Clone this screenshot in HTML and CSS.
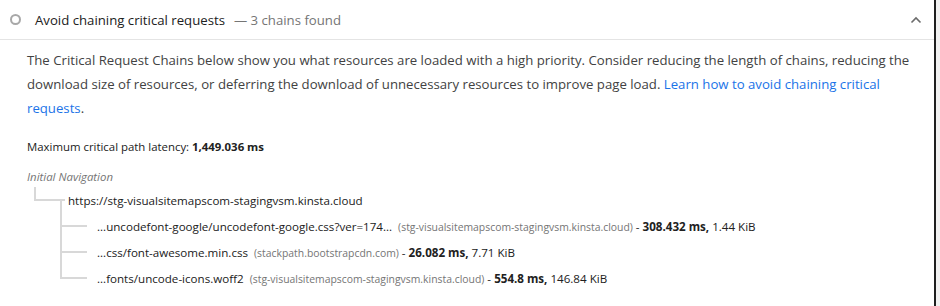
FILE: index.html
```html
<!DOCTYPE html>
<html lang="en">
<head>
    <meta charset="UTF-8">
    <meta name="viewport" content="width=device-width, initial-scale=1.0">
    <title>Avoid chaining critical requests</title>
    <link rel="stylesheet" href="styles.css">
</head>
<body>
    <div class="audit">
        <div class="audit-header">
            <span class="status-icon"></span>
            <span class="audit-title">Avoid chaining critical requests</span>
            <span class="audit-display">— 3 chains found</span>
            <svg class="chevron" width="12" height="8" viewBox="0 0 12 8">
                <path d="M1.5 6.5 L6 2 L10.5 6.5" fill="none" stroke="#6b6b6b" stroke-width="1.6"/>
            </svg>
        </div>

        <div class="audit-body">
            <p class="description">The Critical Request Chains below show you what resources are loaded with a high priority. Consider reducing the length of chains, reducing the download size of resources, or deferring the download of unnecessary resources to improve page load. <a href="#">Learn how to avoid chaining critical requests</a>.</p>

            <div class="crc-summary">Maximum critical path latency: <b>1,449.036 ms</b></div>

            <div class="crc-tree">
                <div class="crc-initial-nav">Initial Navigation</div>

                <div class="crc-node">
                    <span class="marker up-right"></span>
                    <span class="marker right"></span>
                    <span class="marker horiz-down"></span>
                    <span class="node-value first">https://stg-visualsitemapscom-stagingvsm.kinsta.cloud</span>
                </div>

                <div class="crc-node">
                    <span class="marker spacer"></span>
                    <span class="marker vert-right"></span>
                    <span class="marker right wide"></span>
                    <span class="node-value">
                        <span class="url">...uncodefont-google/uncodefont-google.css?ver=174...</span>
                        <span class="host">(stg-visualsitemapscom-stagingvsm.kinsta.cloud)</span>
                        - <span class="duration">308.432 ms,</span> 1.44 KiB
                    </span>
                </div>

                <div class="crc-node">
                    <span class="marker spacer"></span>
                    <span class="marker vert-right"></span>
                    <span class="marker right wide"></span>
                    <span class="node-value">
                        <span class="url">...css/font-awesome.min.css</span>
                        <span class="host">(stackpath.bootstrapcdn.com)</span>
                        - <span class="duration">26.082 ms,</span> 7.71 KiB
                    </span>
                </div>

                <div class="crc-node">
                    <span class="marker spacer"></span>
                    <span class="marker up-right"></span>
                    <span class="marker right wide"></span>
                    <span class="node-value">
                        <span class="url">...fonts/uncode-icons.woff2</span>
                        <span class="host">(stg-visualsitemapscom-stagingvsm.kinsta.cloud)</span>
                        - <span class="duration">554.8 ms,</span> 146.84 KiB
                    </span>
                </div>
            </div>
        </div>
    </div>
</body>
</html>
```

FILE: styles.css
```css
/* Page */
html {
    background: #f1f1f1;
}

body {
    margin: 0;
    font-family: "Open Sans", "Noto Sans", Arial, sans-serif;
    color: #212121;
}

.audit {
    width: 936px;
    height: 306px;
    background: #fff;
    border-right: 2px solid #1f1f1f;
    box-sizing: border-box;
}

/* Header */
.audit-header {
    display: flex;
    align-items: center;
    height: 39px;
    padding: 0 12px 0 10px;
    border-bottom: 1px solid #e4e4e4;
    font-size: 13.2px;
}

.status-icon {
    width: 7px;
    height: 7px;
    border: 2px solid #a8a8a8;
    border-radius: 50%;
    margin-right: 14px;
    margin-top: -1px;
}

.audit-title {
    color: #212121;
}

.audit-display {
    color: #757575;
    margin-left: 9px;
}

.chevron {
    margin-left: auto;
}

/* Body */
.audit-body {
    padding: 8px 18px 0 27px;
}

.description {
    margin: 0;
    font-size: 13.2px;
    line-height: 24px;
    color: #424242;
}

.description a {
    color: #1a73e8;
    text-decoration: none;
}

.crc-summary {
    margin-top: 17px;
    margin-bottom: 10px;
    font-size: 11.4px;
    line-height: 20px;
}

.crc-summary b {
    font-weight: 700;
}

/* Chain tree */
.crc-tree {
    font-size: 11.6px;
    white-space: nowrap;
}

.crc-initial-nav {
    color: #757575;
    font-style: italic;
    font-size: 11.4px;
    line-height: 20px;
}

.crc-node {
    display: flex;
    align-items: center;
    height: 26px;
    padding-left: 7px;
}

.marker {
    display: block;
    width: 13px;
    height: 26px;
    flex-shrink: 0;
    background-repeat: no-repeat;
}

.marker.spacer {
    width: 26px;
}

.marker.wide {
    width: 14px;
}

.marker.right {
    background-image: linear-gradient(#d8d8d8, #d8d8d8);
    background-position: 0 12px;
    background-size: 100% 2px;
}

.marker.up-right {
    background-image: linear-gradient(#d8d8d8, #d8d8d8), linear-gradient(#d8d8d8, #d8d8d8);
    background-position: 0 0, 0 12px;
    background-size: 2px 14px, 100% 2px;
}

.marker.vert-right {
    background-image: linear-gradient(#d8d8d8, #d8d8d8), linear-gradient(#d8d8d8, #d8d8d8);
    background-position: 0 0, 0 12px;
    background-size: 2px 100%, 100% 2px;
}

.marker.horiz-down {
    width: 5px;
    background-image: linear-gradient(#d8d8d8, #d8d8d8), linear-gradient(#d8d8d8, #d8d8d8);
    background-position: 0 12px, 0 12px;
    background-size: 100% 2px, 2px 14px;
}

.node-value {
    margin-left: 10px;
    color: #212121;
}

.node-value.first {
    margin-left: 3px;
}

.host {
    color: #757575;
    font-size: 10.4px;
    margin-left: 3px;
}

.duration {
    font-weight: 700;
}
```
